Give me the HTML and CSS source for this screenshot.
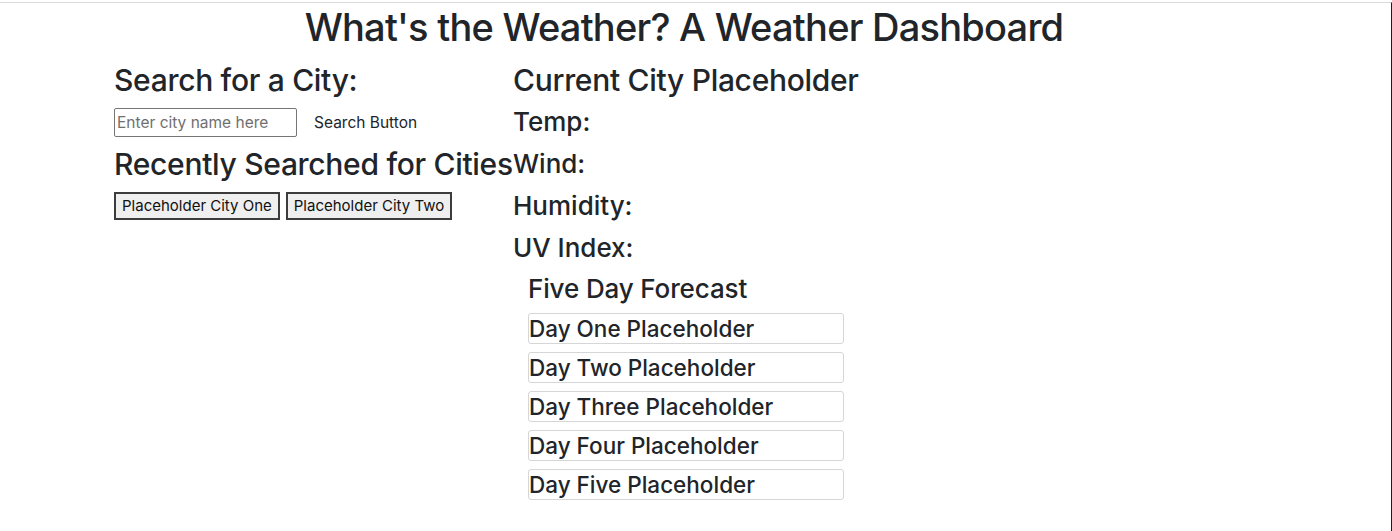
FILE: index.html
```html
<!DOCTYPE html>
<html lang="en">
<head>
<meta charset="utf-8">
<title>What's the Weather?</title>
<link rel="stylesheet" href="styles.css">
</head>
<body>
<div class="frame">
  <div class="container">
    <h1 class="title">What's the Weather? A Weather Dashboard</h1>
    <div class="row">
      <aside class="search-col">
        <h2 class="section-head">Search for a City:</h2>
        <form class="search-form">
          <input class="city-input" type="text" placeholder="Enter city name here">
          <button class="search-btn" type="button">Search Button</button>
        </form>
        <h2 class="section-head recent-head">Recently Searched for Cities</h2>
        <div class="history">
          <button class="history-btn" type="button">Placeholder City One</button>
          <button class="history-btn" type="button">Placeholder City Two</button>
        </div>
      </aside>
      <main class="weather-col">
        <h2 class="section-head">Current City Placeholder</h2>
        <h3 class="stat">Temp:</h3>
        <h3 class="stat">Wind:</h3>
        <h3 class="stat">Humidity:</h3>
        <h3 class="stat">UV Index:</h3>
        <section class="forecast">
          <h4 class="forecast-head">Five Day Forecast</h4>
          <div class="day">Day One Placeholder</div>
          <div class="day">Day Two Placeholder</div>
          <div class="day">Day Three Placeholder</div>
          <div class="day">Day Four Placeholder</div>
          <div class="day">Day Five Placeholder</div>
        </section>
      </main>
    </div>
  </div>
</div>
</body>
</html>
```

FILE: styles.css
```css
* { box-sizing: border-box; }

html, body {
  margin: 0;
  padding: 0;
  background: #ffffff;
}

body {
  font-family: Inter, "Noto Sans", "Liberation Sans", sans-serif;
  color: #212529;
}

.frame {
  margin-top: 2px;
  height: calc(100vh - 2px);
  border-top: 1px solid #d9d9d9;
  border-right: 1px solid #1e1e1e;
}

.container {
  width: 1140px;
  margin-left: 114px;
}

.title {
  margin: 2px 0 0;
  font-size: 38px;
  font-weight: 500;
  letter-spacing: -0.02em;
  line-height: 1.2;
  text-align: center;
}

.row {
  display: flex;
  margin-top: 11px;
}

.search-col {
  width: 399px;
  flex: none;
  white-space: nowrap;
}

.section-head {
  margin: 0;
  font-size: 30px;
  font-weight: 500;
  letter-spacing: -0.01em;
  line-height: 1.2;
}

.search-form {
  display: flex;
  align-items: center;
  margin-top: 9px;
}

.city-input {
  width: 183px;
  height: 29px;
  padding: 1px 2px;
  border: 1px solid #767676;
  border-radius: 2px;
  font-family: inherit;
  font-size: 15.5px;
  color: #212529;
}

.city-input::placeholder { color: #6f6f6f; }

.search-btn {
  margin-left: 4px;
  padding: 6px 13px;
  border: 0;
  background: transparent;
  font-family: inherit;
  font-size: 15.5px;
  color: #212529;
}

.recent-head { margin-top: 8px; }

.history {
  display: flex;
  gap: 6px;
  margin-top: 10px;
}

.history-btn {
  height: 28px;
  padding: 0 6px;
  border: 2px solid #3c3c3c;
  border-radius: 0;
  background: #efefef;
  font-family: inherit;
  font-size: 15px;
  color: #111;
}

.weather-col {
  flex: 1;
}

.stat {
  margin: 8px 0 0;
  font-size: 26px;
  font-weight: 500;
  line-height: 1.2;
}

.stat + .stat { margin-top: 11px; }

.forecast {
  padding-left: 15px;
  margin-top: 9.5px;
}

.forecast-head {
  margin: 0 0 8.5px;
  font-size: 26px;
  font-weight: 500;
  letter-spacing: -0.005em;
  line-height: 1.2;
}

.day {
  width: 316px;
  margin-bottom: 8px;
  border: 1px solid #d6d6d6;
  border-radius: 3px;
  font-size: 22.5px;
  font-weight: 500;
  line-height: 29px;
}
```
